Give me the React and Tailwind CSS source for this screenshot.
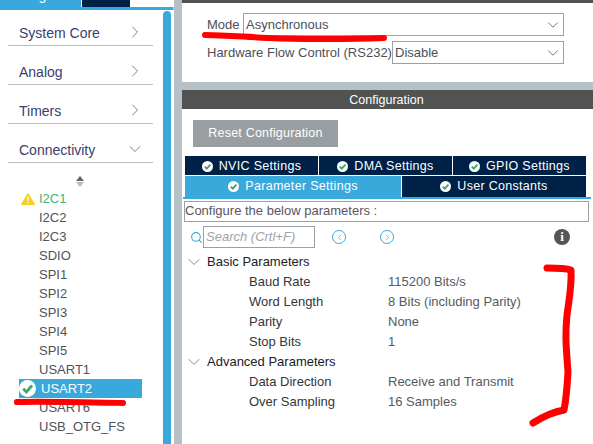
import { ChevronRight, ChevronDown, Search, ChevronLeft } from 'lucide-react'

const categories = ['System Core', 'Analog', 'Timers', 'Connectivity']
const peripherals = ['I2C1', 'I2C2', 'I2C3', 'SDIO', 'SPI1', 'SPI2', 'SPI3', 'SPI4', 'SPI5', 'USART1', 'USART2', 'USART6', 'USB_OTG_FS']

const basicParams = [
  ['Baud Rate', '115200 Bits/s'],
  ['Word Length', '8 Bits (including Parity)'],
  ['Parity', 'None'],
  ['Stop Bits', '1'],
]
const advancedParams = [
  ['Data Direction', 'Receive and Transmit'],
  ['Over Sampling', '16 Samples'],
]

const CheckBadge = ({ size = 12, ring = '#ffffff', tick = '#3fa66b' }) => (
  <svg width={size} height={size} viewBox="0 0 12 12" className="shrink-0">
    <circle cx="6" cy="6" r="6" fill={ring} />
    <path d="M3 6.2 5.2 8.4 9.2 3.9" fill="none" stroke={tick} strokeWidth="2" />
  </svg>
)

const Warning = () => (
  <svg width="14" height="12" viewBox="0 0 14 12" className="shrink-0">
    <path d="M7 0.5 13.6 11.5H0.4Z" fill="#f5cf1d" stroke="#f5cf1d" strokeLinejoin="round" />
    <rect x="6.4" y="3.5" width="1.3" height="4.5" fill="#fff" />
    <rect x="6.4" y="9" width="1.3" height="1.4" fill="#fff" />
  </svg>
)

const Select = ({ value, className }) => (
  <div className={`flex h-[23px] items-center justify-between border border-[#9aa0a4] pl-[2px] pr-[1px] ${className}`}>
    <span>{value}</span>
    <ChevronDown size={18} strokeWidth={1.1} className="text-[#55595c]" />
  </div>
)

const Tab = ({ label, active, className }) => (
  <div className={`flex items-center justify-center gap-[6px] text-[12.5px] tracking-[0.3px] text-white ${active ? 'bg-[#39a9db]' : 'bg-[#002147]'} ${className}`}>
    <CheckBadge size={11} />
    <span>{label}</span>
  </div>
)

const ParamGroup = ({ title, rows }) => (
  <>
    <div className="flex h-5 items-center text-[#1d2024]">
      <ChevronDown size={20} strokeWidth={0.9} className="ml-[2px] mr-[3px] text-[#666]" />
      <span>{title}</span>
    </div>
    {rows.map(([name, value]) => (
      <div key={name} className="flex h-5 items-center">
        <span className="ml-[67px] w-[139px] text-[#33363a]">{name}</span>
        <span className="text-[#565a60]">{value}</span>
      </div>
    ))}
  </>
)

const App = () => {
  return (
    <div className="relative flex h-[444px] w-[593px] overflow-hidden bg-[#b5c0c7] font-['Liberation_Sans',sans-serif] text-[13px] text-[#4a4d55]">
      {/* left column */}
      <div className="flex h-full w-[174px] flex-col">
        <div className="flex h-[7px] shrink-0 overflow-hidden bg-white text-[14px] leading-[16px] text-white">
          <div className="w-[81px] bg-[#39a9db] pl-[9px]"><div className="-mt-[13px]">Categories</div></div>
          <div className="w-[49px] border-l border-white bg-[#002147] pl-[8px]"><div className="-mt-[13px]">A-&gt;Z</div></div>
        </div>
        <div className="mr-px h-[3px] shrink-0 bg-[#39a9db]" />
        <div className="flex flex-1 bg-white">
          <div className="w-[163px] pl-2">
            <div className="-mt-[3px]">
              {categories.map((c) => (
                <div key={c} className="flex h-[39px] w-[145px] items-center justify-between border-b border-[#b5c0c7] pl-[11px] pr-[8px] pt-[15px] text-[14px] text-[#37406f]">
                  <span>{c}</span>
                  {c === 'Connectivity' ? (
                    <ChevronDown size={20} strokeWidth={1} className="mb-[4px] text-[#666]" />
                  ) : (
                    <ChevronRight size={20} strokeWidth={1} className="mb-[3px] text-[#666]" />
                  )}
                </div>
              ))}
            </div>
            <div className="ml-[67px] mt-[13px] flex h-3 w-[9px] flex-col items-center gap-[1px]">
              <div className="h-0 w-0 border-x-[4px] border-b-[5px] border-x-transparent border-b-[#666]" />
              <div className="h-0 w-0 border-x-[4px] border-t-[5px] border-x-transparent border-t-[#bbb]" />
            </div>
            <div className="mt-[1px]">
              {peripherals.map((p) => {
                const selected = p === 'USART2'
                return (
                  <div key={p} className={`ml-[11px] flex h-[19px] w-[123px] items-center ${selected ? 'bg-[#39a9db] text-white' : 'text-[#4f5359]'}`}>
                    {selected && <CheckBadge size={17} />}
                    {p === 'I2C1' && <div className="ml-[2px] mr-[4px] flex"><Warning /></div>}
                    <span className={`${selected ? 'ml-[5px]' : p === 'I2C1' ? 'text-[#3fb57a]' : 'ml-[20px]'}`}>{p}</span>
                  </div>
                )
              })}
            </div>
          </div>
          <div className="mt-[1px] h-[433px] w-[8px] rounded-t-[4px] bg-[#39a9db]" />
        </div>
      </div>

      {/* right column */}
      <div className="ml-[8px] flex h-full w-[411px] flex-col">
        <div className="h-[3px] shrink-0 bg-[#515352]" />
        <div className="h-[79px] shrink-0 bg-white pl-[25px] pr-[29px] pt-[10px] text-[#4b5058]">
          <div className="flex items-center gap-[1px]">
            <span className="w-[35px] shrink-0">Mode</span>
            <Select value="Asynchronous" className="flex-1" />
          </div>
          <div className="mt-[5px] flex items-center">
            <span className="w-[185px] shrink-0 whitespace-nowrap">Hardware Flow Control (RS232)</span>
            <Select value="Disable" className="flex-1" />
          </div>
        </div>
        <div className="h-[8px] shrink-0" />
        <div className="flex h-[19px] shrink-0 items-center justify-center bg-[#515352] pt-px pr-[2px] text-[12.5px] text-white">Configuration</div>
        <div className="flex-1 bg-white">
          <div className="ml-[11px] mt-[11px] flex h-[27px] w-[145px] items-center justify-center bg-[#989ea2] text-[12.5px] tracking-[0.2px] text-white">Reset Configuration</div>
          <div className="ml-[3px] mt-[9px] flex h-[19px] w-[401px] gap-[1px]">
            <Tab label="NVIC Settings" className="w-[133px] pt-px" />
            <Tab label="DMA Settings" className="w-[133px] pt-px" />
            <Tab label="GPIO Settings" className="w-[133px] pt-px" />
          </div>
          <div className="ml-[3px] mt-[1px] flex h-[21px] w-[401px] gap-[1px]">
            <Tab label="Parameter Settings" active className="w-[216px]" />
            <Tab label="User Constants" className="flex-1" />
          </div>
          <div className="ml-[1px] h-[2px] w-[408px] bg-[#39a9db]" />
          <div className="ml-[2px] mt-[2px] flex h-[21px] w-[405px] items-center border border-[#9aa0a4] pb-px text-[#5a5560]">Configure the below parameters :</div>
          <div className="mt-[4px] flex h-[22px] items-center">
            <Search size={13} strokeWidth={2} className="ml-[8px] text-[#39a9db]" />
            <div className="flex h-[22px] w-[112px] items-center border border-[#9aa0a4] pl-[2px] italic text-[#a0a4a8]">Search (Crtl+F)</div>
            <div className="ml-[17px] flex h-[14px] w-[14px] items-center justify-center rounded-full border border-[#39a9db] text-[#39a9db]">
              <ChevronLeft size={9} strokeWidth={2} />
            </div>
            <div className="ml-[34px] flex h-[14px] w-[14px] items-center justify-center rounded-full border border-[#39a9db] text-[#39a9db]">
              <ChevronRight size={9} strokeWidth={2} />
            </div>
            <div className="ml-[160px] flex h-4 w-4 items-center justify-center rounded-full bg-[#555] font-['Liberation_Serif',serif] text-[13px] font-bold text-white">i</div>
          </div>
          <div className="mt-[4px]">
            <ParamGroup title="Basic Parameters" rows={basicParams} />
            <ParamGroup title="Advanced Parameters" rows={advancedParams} />
          </div>
        </div>
      </div>

      {/* red marker annotations drawn over the screenshot */}
      <svg className="pointer-events-none absolute left-0 top-0" width="593" height="444" fill="none" stroke="#ff0000" strokeLinecap="round" strokeLinejoin="round" strokeWidth="6">
        <path d="M205 35C225 35 245 37 280 38.5C320 39.5 360 39 384 38" />
        <path d="M17 402C40 401 80 402 123 403" />
        <path d="M547 268C555 268 565 268 571 270C572 285 569 300 567 315C565 335 566 345 568 372C567 390 566 400 564 410C552 412 544 416 533 423" strokeWidth="7" />
      </svg>
    </div>
  )
}

export default App
